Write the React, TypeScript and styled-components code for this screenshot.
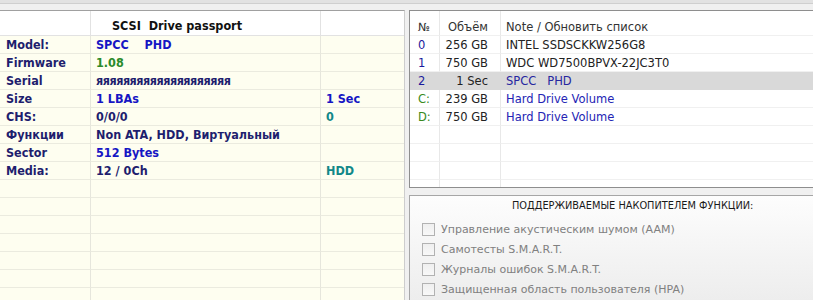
import React from 'react';
import styled, { createGlobalStyle } from 'styled-components';

const GlobalStyle = createGlobalStyle`
  html, body { margin: 0; padding: 0; background: #f0f0f0; }
  body { font-family: "DejaVu Sans", "Liberation Sans", sans-serif; }
  * { box-sizing: border-box; }
`;

const Window = styled.div`
  width: 813px;
  height: 300px;
  overflow: hidden;
  display: flex;
  flex-direction: column;
  background: #f0f0f0;
`;

const TopStrip = styled.div`
  flex: none;
  height: 10px;
  background: linear-gradient(#e2e2e2 0 3px, #cfcfcf 3px 4px, #f0f0f0 4px);
`;

const Main = styled.div`
  flex: 1;
  min-height: 0;
  display: grid;
  grid-template-columns: 405px 1fr;
  column-gap: 4px;
`;

const Passport = styled.div`
  border-top: 1px solid #a0a0a0;
  border-right: 1px solid #cdcdcd;
  background: #fefef0;
  display: grid;
  grid-template-columns: 91px 230px 1fr;
  grid-template-rows: 25px;
  grid-auto-rows: 18px;
  align-content: start;
  overflow: hidden;
`;

const PCell = styled.div<{
  $head?: boolean;
  $color?: string;
  $last?: boolean;
  $pad?: number;
  $tight?: boolean;
}>`
  display: flex;
  align-items: center;
  padding-left: ${p => p.$pad ?? 5}px;
  padding-top: ${p => (p.$head ? 4 : 0)}px;
  white-space: pre;
  overflow: hidden;
  font-size: 12.5px;
  font-weight: bold;
  font-stretch: semi-condensed;
  letter-spacing: ${p => (p.$tight ? '-0.5px' : 'normal')};
  color: ${p => p.$color ?? '#1e1e6e'};
  background: ${p => (p.$head ? '#ffffff' : 'transparent')};
  border-bottom: 1px solid ${p => (p.$head ? '#e2e2e2' : '#ebebdf')};
  border-right: ${p => (p.$last ? 'none' : `1px solid ${p.$head ? '#e2e2e2' : '#e6e6dc'}`)};
`;

const RightCol = styled.div`
  display: flex;
  flex-direction: column;
  gap: 7px;
  min-height: 0;
`;

const DriveList = styled.div`
  flex: none;
  height: 178px;
  border: 1px solid #8e8e8e;
  border-right: none;
  background: #ffffff;
  display: grid;
  grid-template-columns: 30px 61px 1fr;
  grid-template-rows: 25px;
  grid-auto-rows: 18px;
  align-content: start;
  overflow: hidden;
`;

const LCell = styled.div<{
  $color?: string;
  $align?: 'left' | 'right';
  $sel?: boolean;
  $last?: boolean;
  $pad?: number;
  $head?: boolean;
}>`
  display: flex;
  align-items: center;
  justify-content: ${p => (p.$align === 'right' ? 'flex-end' : 'flex-start')};
  padding-left: ${p => (p.$align === 'right' ? 0 : p.$pad ?? 5)}px;
  padding-right: ${p => (p.$align === 'right' ? 12 : 0)}px;
  padding-top: ${p => (p.$head ? 7 : 1)}px;
  white-space: pre;
  overflow: hidden;
  font-size: 11.5px;
  color: ${p => p.$color ?? '#222222'};
  background: ${p => (p.$sel ? '#d9d9d9' : 'transparent')};
  border-bottom: 1px solid ${p => (p.$sel ? '#d9d9d9' : '#f0f0f0')};
  border-right: ${p => (p.$last ? 'none' : `1px solid ${p.$sel ? '#d9d9d9' : '#e8e8e8'}`)};
`;

const Features = styled.div`
  flex: 1;
  min-height: 0;
  border-top: 1px solid #a6a6a6;
  border-left: 1px solid #a6a6a6;
  background: linear-gradient(#fdfdfd, #ededed);
  display: flex;
  flex-direction: column;
  padding-left: 12px;
`;

const FeaturesTitle = styled.div`
  height: 23px;
  padding-left: 90px;
  padding-top: 3px;
  display: flex;
  align-items: flex-start;
  font-size: 9.8px;
  line-height: 13px;
  color: #1a1a1a;
  white-space: nowrap;
`;

const FeatureRow = styled.label`
  height: 20px;
  display: flex;
  align-items: center;
  gap: 6px;
  font-size: 11px;
  color: #808080;
  white-space: nowrap;
`;

const Box = styled.span`
  width: 13px;
  height: 13px;
  flex: none;
  border: 1px solid #b2b2b2;
  background: linear-gradient(#efefef, #f8f8f8);
`;

type PRow = {
  label: string;
  value: string;
  vColor: string;
  extra?: string;
  eColor?: string;
  tight?: boolean;
};

const NAVY = '#1e1e6e';
const BLUE = '#1616c4';
const GREEN = '#2a8a2a';
const TEAL = '#128888';

const passportRows: PRow[] = [
  { label: 'Model:', value: 'SPCC    PHD', vColor: BLUE },
  { label: 'Firmware', value: '1.08', vColor: GREEN },
  { label: 'Serial', value: 'яяяяяяяяяяяяяяяяяяяя', vColor: NAVY, tight: true },
  { label: 'Size', value: '1 LBAs', vColor: BLUE, extra: '1 Sec', eColor: BLUE },
  { label: 'CHS:', value: '0/0/0', vColor: NAVY, extra: '0', eColor: TEAL },
  { label: 'Функции', value: 'Non ATA, HDD, Виртуальный', vColor: NAVY },
  { label: 'Sector', value: '512 Bytes', vColor: BLUE },
  { label: 'Media:', value: '12 / 0Ch', vColor: NAVY, extra: 'HDD', eColor: TEAL },
];

type DRow = { n: string; nColor: string; size: string; note: string; noteColor: string; sel?: boolean };

const drives: DRow[] = [
  { n: '0', nColor: '#1a1a9c', size: '256 GB', note: 'INTEL SSDSCKKW256G8', noteColor: '#222222' },
  { n: '1', nColor: '#1a1a9c', size: '750 GB', note: 'WDC WD7500BPVX-22JC3T0', noteColor: '#222222' },
  { n: '2', nColor: '#1a1a9c', size: '1 Sec', note: 'SPCC   PHD', noteColor: '#2626a0', sel: true },
  { n: 'C:', nColor: '#3a8a1e', size: '239 GB', note: 'Hard Drive Volume', noteColor: '#2424b4' },
  { n: 'D:', nColor: '#3a8a1e', size: '750 GB', note: 'Hard Drive Volume', noteColor: '#2424b4' },
];

const features = [
  'Управление акустическим шумом (AAM)',
  'Самотесты S.M.A.R.T.',
  'Журналы ошибок S.M.A.R.T.',
  'Защищенная область пользователя (HPA)',
];

export default function App() {
  const emptyPassport = Array.from({ length: 15 - passportRows.length });
  const emptyDrives = Array.from({ length: 9 - drives.length });
  return (
    <>
      <GlobalStyle />
      <Window>
        <TopStrip />
        <Main>
          <Passport>
            <PCell $head />
            <PCell $head $pad={21} $color="#111111">
              {'SCSI  Drive passport'}
            </PCell>
            <PCell $head $last />
            {passportRows.map(r => (
              <React.Fragment key={r.label}>
                <PCell $pad={6}>{r.label}</PCell>
                <PCell $color={r.vColor} $tight={r.tight}>{r.value}</PCell>
                <PCell $last $color={r.eColor}>{r.extra ?? ''}</PCell>
              </React.Fragment>
            ))}
            {emptyPassport.map((_, i) => (
              <React.Fragment key={'e' + i}>
                <PCell />
                <PCell />
                <PCell $last />
              </React.Fragment>
            ))}
          </Passport>
          <RightCol>
            <DriveList>
              <LCell $head $pad={8} $color="#333333">№</LCell>
              <LCell $head $align="right" $color="#333333">Объём</LCell>
              <LCell $head $last $color="#333333">Note / Обновить список</LCell>
              {drives.map(d => (
                <React.Fragment key={d.n}>
                  <LCell $pad={8} $sel={d.sel} $color={d.nColor}>{d.n}</LCell>
                  <LCell $align="right" $sel={d.sel}>{d.size}</LCell>
                  <LCell $last $sel={d.sel} $color={d.noteColor}>{d.note}</LCell>
                </React.Fragment>
              ))}
              {emptyDrives.map((_, i) => (
                <React.Fragment key={'d' + i}>
                  <LCell />
                  <LCell />
                  <LCell $last />
                </React.Fragment>
              ))}
            </DriveList>
            <Features>
              <FeaturesTitle>ПОДДЕРЖИВАЕМЫЕ НАКОПИТЕЛЕМ ФУНКЦИИ:</FeaturesTitle>
              {features.map(f => (
                <FeatureRow key={f}>
                  <Box />
                  {f}
                </FeatureRow>
              ))}
            </Features>
          </RightCol>
        </Main>
      </Window>
    </>
  );
}
